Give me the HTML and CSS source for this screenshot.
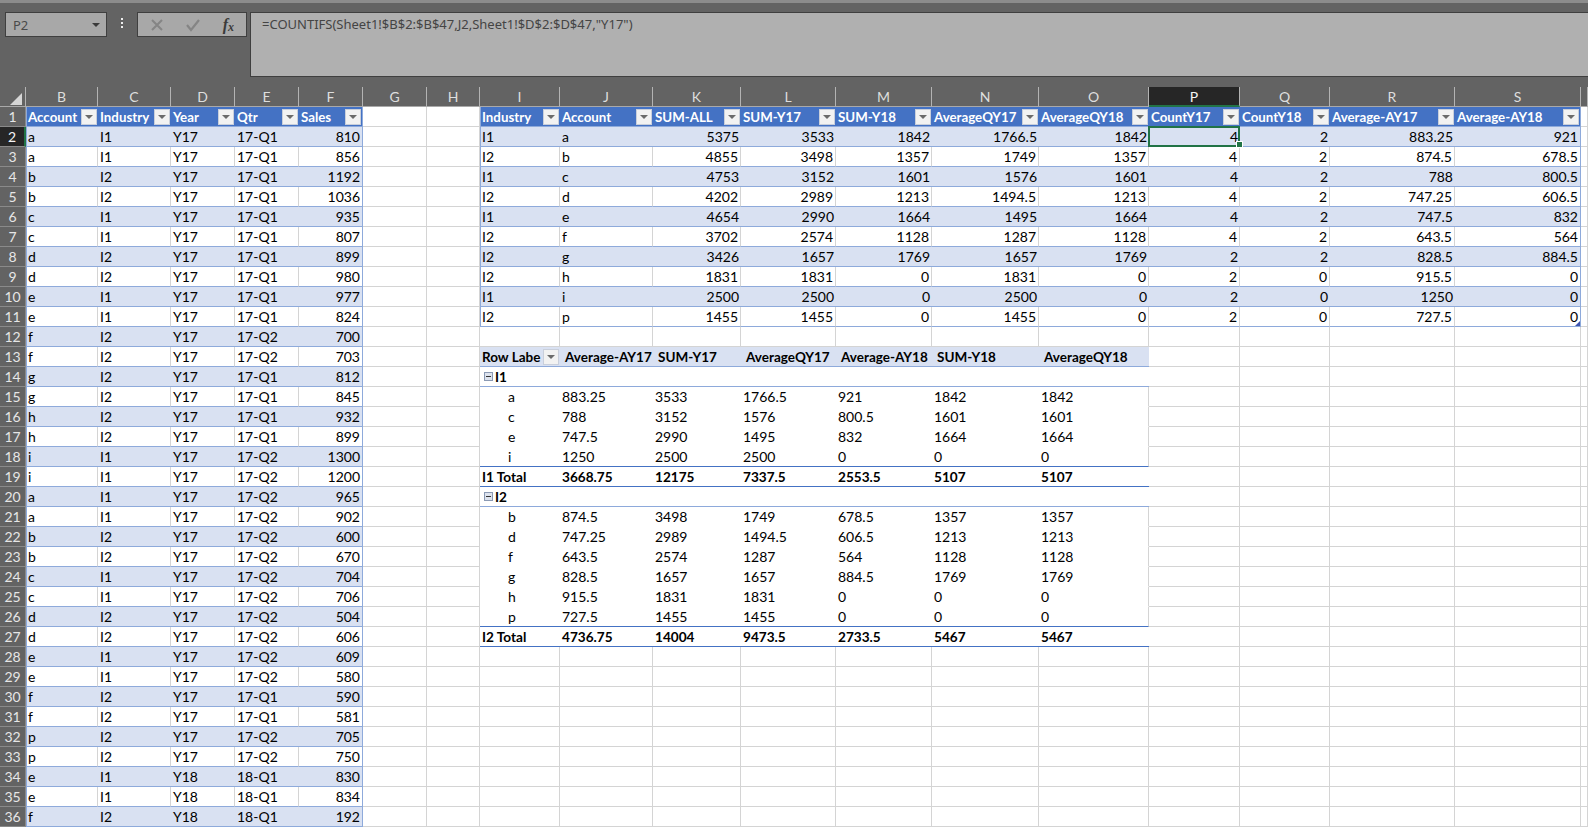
FILE: index.html
```html
<!DOCTYPE html>
<html lang="en">
<head>
    <meta charset="UTF-8">
    <title>Sheet1 - Excel</title>
    <link rel="stylesheet" href="styles.css">
</head>
<body>
    <div class="formula-bar">
        <div class="name-box"><span>P2</span><i class="name-arrow"></i></div>
        <div class="grip"><i></i><i></i><i></i></div>
        <div class="fx-box">
            <svg class="fx-icon" width="14" height="14" viewBox="0 0 14 14"><path d="M2 2 L12 12 M12 2 L2 12" stroke="#858585" stroke-width="2" fill="none"/></svg>
            <svg class="fx-icon" width="16" height="14" viewBox="0 0 16 14"><path d="M2 7 L6 12 L14 2" stroke="#858585" stroke-width="2.2" fill="none"/></svg>
            <span class="fx-label">f<sub>x</sub></span>
        </div>
        <div class="formula-input">=COUNTIFS(Sheet1!$B$2:$B$47,J2,Sheet1!$D$2:$D$47,"Y17")</div>
    </div>
    <table class="sheet" id="sheet"></table>
    <script src="script.js"></script>
</body>
</html>
```

FILE: styles.css
```css
html, body { margin: 0; height: 100%; overflow: hidden; }
body { background: #636363; font-family: Lato, "Liberation Sans", sans-serif; font-size: 14px; color: #000; }

/* formula bar */
.formula-bar {
    display: flex; align-items: flex-start; height: 87px; box-sizing: border-box;
    padding: 9px 0 0 5px; background: #636363;
    border-top: 3px solid #8c8c8c;
    font-family: "Noto Sans", sans-serif; font-size: 13px;
}
.name-box {
    display: flex; align-items: center; justify-content: space-between;
    width: 102px; height: 25px; box-sizing: border-box; padding: 0 6px 0 7px;
    background: #a8a8a8; border: 1px solid #3f3f3f; color: #4a4a4a;
}
.name-arrow { border: 4px solid transparent; border-top: 4px solid #3a3a3a; border-bottom: 0; }
.grip { display: flex; flex-direction: column; gap: 2px; width: 2px; margin: 6px 14px 0 14px; }
.grip i { width: 2px; height: 2px; background: #eee; }
.fx-box {
    display: flex; align-items: center; justify-content: space-between;
    width: 110px; height: 25px; box-sizing: border-box; padding: 0 12px 0 12px;
    background: #a8a8a8; border: 1px solid #3f3f3f;
}
.fx-label { font: italic bold 16px "Liberation Serif", serif; color: #3a3a3a; line-height: 16px; }
.fx-label sub { font-size: 12px; line-height: 0; vertical-align: -1px; }
.formula-input {
    flex: 1; height: 65px; box-sizing: border-box; margin-left: 3px; padding: 2px 0 0 11px;
    background: #b0b0b0; border: 1px solid #3f3f3f; border-right: 0; color: #444;
}

/* grid */
.sheet { border-collapse: separate; border-spacing: 0; table-layout: fixed; width: 1588px; }
.sheet td, .sheet th {
    height: 20px; box-sizing: border-box; padding: 0 2px; overflow: hidden; white-space: nowrap;
    font-weight: normal; text-align: left; position: relative;
    background: #fff; border-right: 1px solid #d4d4d4; border-bottom: 1px solid #d4d4d4;
}
.sheet .num { text-align: right; }

.sheet .col-head {
    background: #636363; color: #dedede; text-align: center; padding: 0;
    border-right: 1px solid #b3b3b3; border-bottom: 1px solid #a9a9a9;
}
.sheet .col-head.active { background: #262626; color: #f4f4f4; border-bottom: 2px solid #217346; }
.sheet .corner { background: #636363; border-right: 1px solid #b3b3b3; border-bottom: 1px solid #a9a9a9; padding: 0; }
.corner i {
    display: block; width: 12px; height: 12px; margin: 5px 0 0 10px; background: #d6d6d6;
    clip-path: polygon(100% 0, 100% 100%, 0 100%);
}
.sheet .row-head {
    background: #636363; color: #e6e6e6; text-align: center; padding: 0;
    border-right: 1px solid #8a8a8a; border-bottom: 1px solid #8a8a8a;
}
.sheet .row-head.active { background: #262626; color: #f4f4f4; border-right: 2px solid #217346; }

/* list tables */
.sheet .thead {
    background: #4472c4; color: #fff; font-weight: bold; font-size: 13.3px; padding: 0 1px 0 2px;
    border-right: 0; border-bottom: 1px solid #8eaadb;
}
.head-in { display: flex; align-items: center; justify-content: space-between; height: 19px; }
.head-in span { flex: none; }
.filter {
    flex: 0 1 16px; display: flex; align-items: center; justify-content: center;
    height: 16px; box-sizing: border-box; margin-left: 1px;
    background: #f2f2f2; border: 1px solid #c9cfdb;
}
.filter::after { content: ""; border: 4px solid transparent; border-top: 4px solid #6b6b6b; border-bottom: 0; }
.sheet .band { background: #d9e1f2; border-right: 0; border-bottom: 1px solid #8eaadb; }
.sheet .plain { border-bottom: 1px solid #8eaadb; }
.sheet .edge-l { border-left: 1px solid #8eaadb; padding-left: 1px; }
.sheet .edge-r { border-right: 1px solid #8eaadb; }

/* pivot */
.sheet .pv { border-right: 0; border-bottom: 1px solid transparent; }
.sheet .pv-above { border-bottom: 1px solid #4472c4; }
.sheet .pv-last { border-right: 1px solid #d4d4d4; }
.sheet .pv-head { background: #d9e1f2; font-weight: bold; font-size: 13.5px; padding-left: 5px; border-right: 0; border-bottom: 1px solid #8eaadb; }
.sheet .pv-first { padding-left: 2px; padding-right: 1px; }
.sheet .pv-group { font-weight: bold; font-size: 13.6px; border-right: 0; border-bottom: 1px solid #8eaadb; }
.sheet .pv-item { padding-left: 28px; }
.sheet .pv-total { font-weight: bold; font-size: 13.6px; border-right: 0; border-bottom: 1px solid #4472c4; }
.group-in { display: flex; align-items: center; gap: 2px; }
.toggle {
    width: 9px; height: 9px; box-sizing: border-box; margin-left: 2px; border: 1px solid #8a99b3;
    background: #dde3ee; position: relative;
}
.toggle::after { content: ""; position: absolute; left: 1px; right: 1px; top: 3px; height: 1px; background: #333; }

/* selection */
.sheet .selected { overflow: visible; z-index: 1; }
.selected::after {
    content: ""; position: absolute; left: -1px; top: -1px; right: 0; bottom: -1px;
    border: 2px solid #217346;
}
.handle {
    position: absolute; right: -3px; bottom: -2px; width: 5px; height: 5px; z-index: 2;
    background: #217346; border: 1px solid #fff;
}
.resize {
    position: absolute; right: 0; bottom: 0; width: 5px; height: 5px; background: #3f55b0;
    clip-path: polygon(100% 0, 100% 100%, 0 100%);
}
```

FILE: script.js
```js
const widths = [26, 72, 73, 64, 64, 64, 64, 53, 80, 93, 88, 95, 96, 107, 110, 91, 90, 125, 126, 7];
const letters = "BCDEFGHIJKLMNOPQRS".split("");

const sales = [
    ["a","I1","Y17","17-Q1",810], ["a","I1","Y17","17-Q1",856], ["b","I2","Y17","17-Q1",1192],
    ["b","I2","Y17","17-Q1",1036], ["c","I1","Y17","17-Q1",935], ["c","I1","Y17","17-Q1",807],
    ["d","I2","Y17","17-Q1",899], ["d","I2","Y17","17-Q1",980], ["e","I1","Y17","17-Q1",977],
    ["e","I1","Y17","17-Q1",824], ["f","I2","Y17","17-Q2",700], ["f","I2","Y17","17-Q2",703],
    ["g","I2","Y17","17-Q1",812], ["g","I2","Y17","17-Q1",845], ["h","I2","Y17","17-Q1",932],
    ["h","I2","Y17","17-Q1",899], ["i","I1","Y17","17-Q2",1300], ["i","I1","Y17","17-Q2",1200],
    ["a","I1","Y17","17-Q2",965], ["a","I1","Y17","17-Q2",902], ["b","I2","Y17","17-Q2",600],
    ["b","I2","Y17","17-Q2",670], ["c","I1","Y17","17-Q2",704], ["c","I1","Y17","17-Q2",706],
    ["d","I2","Y17","17-Q2",504], ["d","I2","Y17","17-Q2",606], ["e","I1","Y17","17-Q2",609],
    ["e","I1","Y17","17-Q2",580], ["f","I2","Y17","17-Q1",590], ["f","I2","Y17","17-Q1",581],
    ["p","I2","Y17","17-Q2",705], ["p","I2","Y17","17-Q2",750], ["e","I1","Y18","18-Q1",830],
    ["e","I1","Y18","18-Q1",834], ["f","I2","Y18","18-Q1",192]
];
const salesHead = ["Account", "Industry", "Year", "Qtr", "Sales"];

const summaryHead = ["Industry", "Account", "SUM-ALL", "SUM-Y17", "SUM-Y18", "AverageQY17", "AverageQY18",
    "CountY17", "CountY18", "Average-AY17", "Average-AY18"];
const summary = [
    ["I1","a",5375,3533,1842,1766.5,1842,4,2,883.25,921],
    ["I2","b",4855,3498,1357,1749,1357,4,2,874.5,678.5],
    ["I1","c",4753,3152,1601,1576,1601,4,2,788,800.5],
    ["I2","d",4202,2989,1213,1494.5,1213,4,2,747.25,606.5],
    ["I1","e",4654,2990,1664,1495,1664,4,2,747.5,832],
    ["I2","f",3702,2574,1128,1287,1128,4,2,643.5,564],
    ["I2","g",3426,1657,1769,1657,1769,2,2,828.5,884.5],
    ["I2","h",1831,1831,0,1831,0,2,0,915.5,0],
    ["I1","i",2500,2500,0,2500,0,2,0,1250,0],
    ["I2","p",1455,1455,0,1455,0,2,0,727.5,0]
];

// pivot rows start at sheet row 13
const pivot = [
    ["head", "Row Labe", "Average-AY17", "SUM-Y17", "AverageQY17", "Average-AY18", "SUM-Y18", "AverageQY18"],
    ["group", "I1"],
    ["item", "a", 883.25, 3533, 1766.5, 921, 1842, 1842],
    ["item", "c", 788, 3152, 1576, 800.5, 1601, 1601],
    ["item", "e", 747.5, 2990, 1495, 832, 1664, 1664],
    ["item", "i", 1250, 2500, 2500, 0, 0, 0],
    ["total", "I1 Total", 3668.75, 12175, 7337.5, 2553.5, 5107, 5107],
    ["group", "I2"],
    ["item", "b", 874.5, 3498, 1749, 678.5, 1357, 1357],
    ["item", "d", 747.25, 2989, 1494.5, 606.5, 1213, 1213],
    ["item", "f", 643.5, 2574, 1287, 564, 1128, 1128],
    ["item", "g", 828.5, 1657, 1657, 884.5, 1769, 1769],
    ["item", "h", 915.5, 1831, 1831, 0, 0, 0],
    ["item", "p", 727.5, 1455, 1455, 0, 0, 0],
    ["total", "I2 Total", 4736.75, 14004, 9473.5, 2733.5, 5467, 5467]
];

function td(text, cls) {
    const c = document.createElement("td");
    if (cls) c.className = cls;
    if (text !== undefined && text !== "") c.textContent = text;
    return c;
}

function headCell(text, cls) {
    const c = td("", cls);
    c.innerHTML = '<div class="head-in"><span>' + text + '</span><i class="filter"></i></div>';
    return c;
}

function salesCells(tr, r) {
    if (r === 1) {
        salesHead.forEach((h, i) => tr.appendChild(headCell(h, "thead" + (i === 0 ? " edge-l" : i === 4 ? " edge-r" : ""))));
        return;
    }
    const row = sales[r - 2];
    const base = r % 2 === 0 ? "band" : "plain";
    row.forEach((v, i) => {
        let cls = base;
        if (i === 0) cls += " edge-l";
        if (i === 4) cls += " num edge-r";
        tr.appendChild(td(v, cls));
    });
}

function summaryCells(tr, r) {
    if (r === 1) {
        summaryHead.forEach((h, i) => tr.appendChild(headCell(h, "thead" + (i === 0 ? " edge-l" : i === 10 ? " edge-r" : ""))));
        return;
    }
    const row = summary[r - 2];
    const base = r % 2 === 0 ? "band" : "plain";
    row.forEach((v, i) => {
        let cls = base;
        if (i > 1) cls += " num";
        if (i === 0) cls += " edge-l";
        if (i === 10) cls += " edge-r";
        if (r === 2 && i === 7) cls += " selected";
        const c = td(v, cls);
        if (r === 2 && i === 7) c.insertAdjacentHTML("beforeend", '<i class="handle"></i>');
        if (r === 11 && i === 10) c.insertAdjacentHTML("beforeend", '<i class="resize"></i>');
        tr.appendChild(c);
    });
}

function pivotCells(tr, row, next) {
    const kind = row[0];
    for (let i = 0; i < 7; i++) {
        const v = row[i + 1];
        let cls = "pv";
        if (kind === "head") cls = "pv-head" + (i === 0 ? " pv-first" : "");
        if (kind === "group") cls = "pv-group";
        if (kind === "total") cls = "pv-total";
        if (kind === "item" && i === 0) cls += " pv-item";
        if (kind === "item" && next && next[0] === "total") cls += " pv-above";
        if (i === 6) cls += " pv-last";
        if (kind === "head" && i === 0) {
            tr.appendChild(headCell(v, cls));
        } else if (kind === "group" && i === 0) {
            const c = td("", cls);
            c.innerHTML = '<div class="group-in"><i class="toggle"></i><span>' + v + '</span></div>';
            tr.appendChild(c);
        } else {
            tr.appendChild(td(v, cls));
        }
    }
}

const sheet = document.getElementById("sheet");
const colgroup = document.createElement("colgroup");
widths.forEach(w => {
    const col = document.createElement("col");
    col.style.width = w + "px";
    colgroup.appendChild(col);
});
sheet.appendChild(colgroup);

const head = document.createElement("tr");
head.appendChild(td("", "corner"));
head.lastChild.innerHTML = "<i></i>";
letters.forEach(l => head.appendChild(td(l, "col-head" + (l === "P" ? " active" : ""))));
head.appendChild(td("", "col-head"));
sheet.appendChild(head);

for (let r = 1; r <= 36; r++) {
    const tr = document.createElement("tr");
    tr.appendChild(td(r, "row-head" + (r === 2 ? " active" : "")));
    salesCells(tr, r);
    tr.appendChild(td()); // G
    tr.appendChild(td()); // H
    if (r <= 11) {
        summaryCells(tr, r);
    } else {
        const row = pivot[r - 13];
        if (row) {
            pivotCells(tr, row, pivot[r - 12]);
        } else {
            for (let i = 0; i < 7; i++) tr.appendChild(td());
        }
        for (let i = 0; i < 4; i++) tr.appendChild(td());
    }
    tr.appendChild(td());
    sheet.appendChild(tr);
}
```
